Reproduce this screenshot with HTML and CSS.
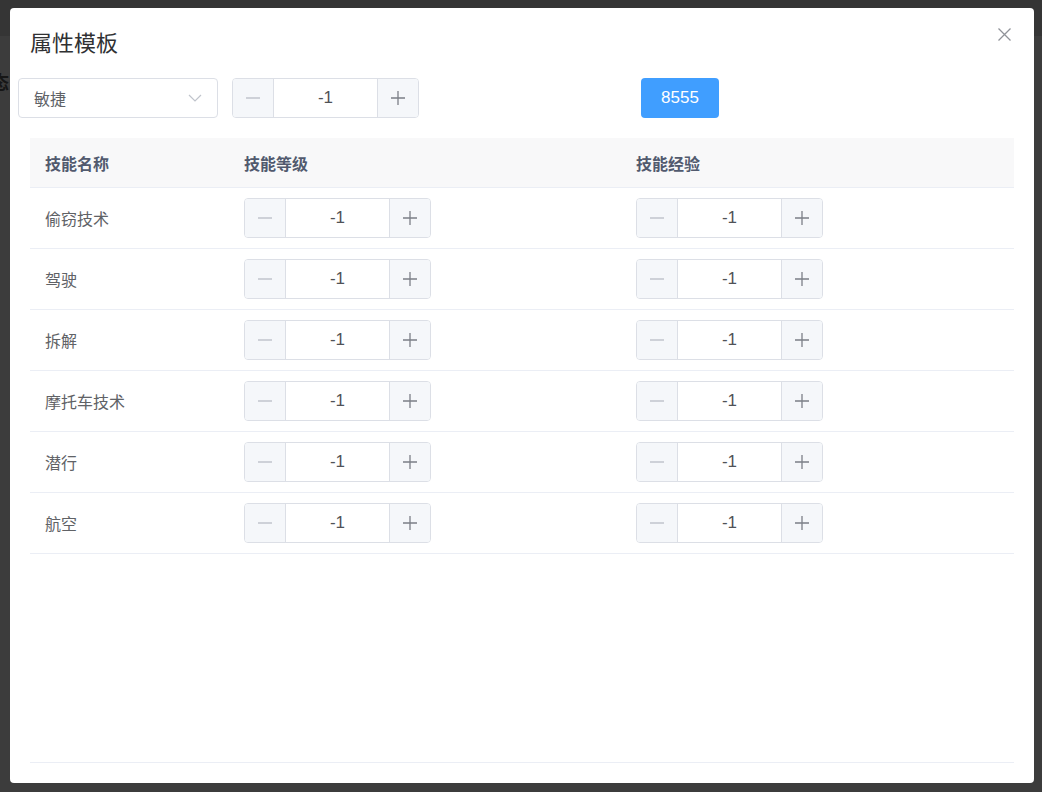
FILE: index.html
```html
<!DOCTYPE html>
<html lang="zh-CN">
<head>
    <meta charset="UTF-8">
    <meta name="viewport" content="width=device-width, initial-scale=1.0">
    <title>属性模板</title>
    <link rel="stylesheet" href="styles.css">
</head>
<body>
    <!-- pagina de fondo, tapada por la capa oscura -->
    <div class="page-header"></div>
    <span class="page-behind">态</span>

    <div class="dialog">
        <div class="dialog-header">
            <span class="dialog-title">属性模板</span>
            <button class="dialog-close" aria-label="close">
                <svg width="13" height="13" viewBox="0 0 13 13"><path d="M0.5 0.5 L12.5 12.5 M12.5 0.5 L0.5 12.5" stroke="#909399" stroke-width="1.3" fill="none"/></svg>
            </button>
        </div>

        <div class="dialog-body">
            <div class="toolbar">
                <div class="select">
                    <span>敏捷</span>
                    <svg class="select-arrow" width="14" height="8" viewBox="0 0 14 8"><path d="M1 1 L7 7 L13 1" stroke="#c0c4cc" stroke-width="1.2" fill="none"/></svg>
                </div>
                <div class="number-input toolbar-number">
                    <span class="num-btn"><svg width="14" height="14" viewBox="0 0 14 14"><path d="M0 7 H14" stroke="#c0c4cc" stroke-width="1.3"/></svg></span>
                    <span class="num-value">-1</span>
                    <span class="num-btn plus"><svg width="14" height="14" viewBox="0 0 14 14"><path d="M0 7 H14 M7 0 V14" stroke="#7b7f87" stroke-width="1.3"/></svg></span>
                </div>
                <button class="primary-btn">8555</button>
            </div>

            <div class="table">
                <div class="table-row table-head">
                    <div class="cell col-name">技能名称</div>
                    <div class="cell col-level">技能等级</div>
                    <div class="cell col-exp">技能经验</div>
                </div>
                <div id="rows"></div>
            </div>
        </div>
    </div>

    <script>
        // Filas de habilidades
        var skills = ['偷窃技术', '驾驶', '拆解', '摩托车技术', '潜行', '航空'];

        function numberInput(value) {
            return '<div class="number-input">' +
                '<span class="num-btn"><svg width="14" height="14" viewBox="0 0 14 14"><path d="M0 7 H14" stroke="#c0c4cc" stroke-width="1.3"/></svg></span>' +
                '<span class="num-value">' + value + '</span>' +
                '<span class="num-btn plus"><svg width="14" height="14" viewBox="0 0 14 14"><path d="M0 7 H14 M7 0 V14" stroke="#7b7f87" stroke-width="1.3"/></svg></span>' +
                '</div>';
        }

        var html = '';
        skills.forEach(function (name) {
            html += '<div class="table-row">' +
                '<div class="cell col-name">' + name + '</div>' +
                '<div class="cell col-level">' + numberInput(-1) + '</div>' +
                '<div class="cell col-exp">' + numberInput(-1) + '</div>' +
                '</div>';
        });
        document.getElementById('rows').innerHTML = html;
    </script>
</body>
</html>
```

FILE: styles.css
```css
body {
    margin: 0;
    height: 792px;
    overflow: hidden;
    background-color: #3c3c3c;
    font-family: 'Liberation Sans', 'Noto Sans CJK SC', sans-serif;
    position: relative;
}
.page-header {
    height: 36px;
    background-color: #353535;
}
.page-behind {
    position: absolute;
    left: -9px;
    top: 68px;
    font-size: 18px;
    font-weight: bold;
    color: #161616;
}
.dialog {
    position: absolute;
    left: 10px;
    top: 8px;
    width: 1024px;
    height: 775px;
    background-color: #fff;
    border-radius: 4px;
    box-sizing: border-box;
}
.dialog-header {
    padding: 21px 20px 19px 20px;
}
.dialog-title {
    display: block;
    font-size: 22px;
    line-height: 30px;
    color: #303133;
}
.dialog-close {
    position: absolute;
    top: 20px;
    right: 23px;
    padding: 0;
    border: none;
    background: none;
    width: 13px;
    height: 13px;
    cursor: pointer;
}
.dialog-close svg {
    display: block;
}
.dialog-body {
    padding: 0 20px;
}
.toolbar {
    display: flex;
    align-items: center;
    height: 40px;
}
.select {
    width: 200px;
    height: 40px;
    margin-left: -12px;
    box-sizing: border-box;
    border: 1px solid #dcdfe6;
    border-radius: 4px;
    padding: 0 15px;
    display: flex;
    align-items: center;
    justify-content: space-between;
    font-size: 16px;
    color: #606266;
}
.number-input {
    width: 187px;
    height: 40px;
    box-sizing: border-box;
    border: 1px solid #dcdfe6;
    border-radius: 4px;
    display: flex;
    overflow: hidden;
    background-color: #fff;
}
.toolbar-number {
    margin-left: 14px;
}
.num-btn {
    width: 40px;
    flex: none;
    background-color: #f5f7fa;
    border-right: 1px solid #dcdfe6;
    display: flex;
    align-items: center;
    justify-content: center;
}
.num-btn.plus {
    border-right: none;
    border-left: 1px solid #dcdfe6;
}
.num-value {
    flex: 1;
    display: flex;
    align-items: center;
    justify-content: center;
    font-size: 17px;
    color: #505257;
}
.primary-btn {
    margin-left: 222px;
    width: 78px;
    height: 40px;
    border: none;
    border-radius: 4px;
    background-color: #409eff;
    color: #fff;
    font-family: inherit;
    font-size: 17px;
    padding: 0;
}
.table {
    margin-top: 20px;
    height: 625px;
    box-sizing: border-box;
    border-bottom: 1px solid #ebeef5;
}
.table-row {
    display: flex;
    height: 61px;
    box-sizing: border-box;
    border-bottom: 1px solid #ebeef5;
}
.table-head {
    height: 50px;
    background-color: #f8f8f9;
    font-weight: bold;
}
.cell {
    display: flex;
    align-items: center;
    padding: 0 14px 0 15px;
    box-sizing: border-box;
    font-size: 16px;
    color: #606266;
}
.table-head .cell {
    color: #515a6e;
    font-size: 16px;
}
.col-name {
    width: 199px;
}
.col-level {
    width: 392px;
}
.col-exp {
    flex: 1;
}
```
